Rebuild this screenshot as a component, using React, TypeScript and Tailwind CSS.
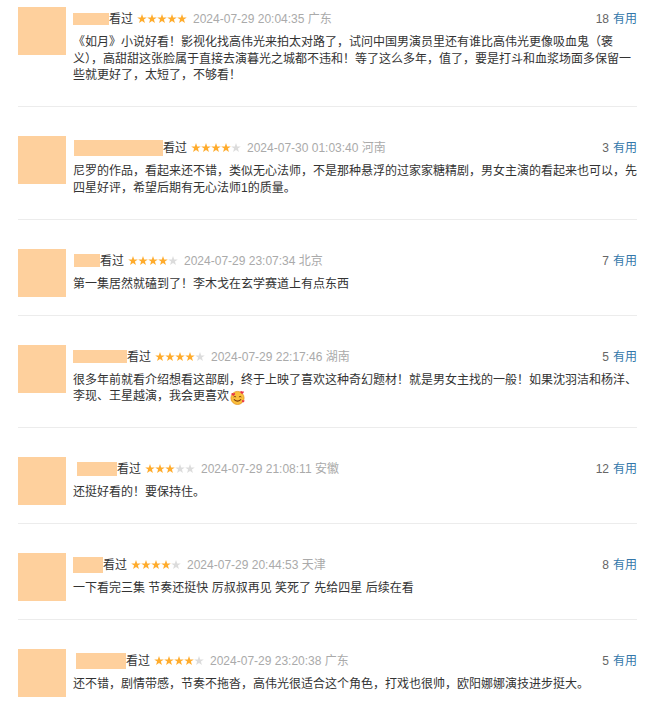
import React from "react"

type Review = {
    nameClass: string
    stars: number
    date: string
    place: string
    useful: number
    lines: React.ReactNode[]
}

function Stars({ count }: { count: number }) {
    const pts = "5,0 6.18,3.38 9.76,3.45 6.9,5.62 7.94,9.05 5,7 2.06,9.05 3.1,5.62 0.24,3.45 3.82,3.38"
    return (
        <svg width="50" height="10" viewBox="0 0 50 10" className="ml-[4px] mr-[6px] shrink-0">
            {[0, 1, 2, 3, 4].map((i) => (
                <polygon
                    key={i}
                    points={pts}
                    transform={`translate(${i * 10} 0)`}
                    fill={i < count ? "#ffac2d" : "#dcdcdc"}
                />
            ))}
        </svg>
    )
}

function HeartFace() {
    return (
        <svg width="15" height="15" viewBox="0 0 16 16" className="inline-block align-[-2px] ml-[1px] -mt-[3px] -mb-[3px]">
            <circle cx="8" cy="8.5" r="7" fill="#fbbf3c" stroke="#e2901a" strokeWidth="0.8" />
            <path d="M4.5 10.2 Q8 13.6 11.5 10.2" fill="none" stroke="#7a3b0c" strokeWidth="1.1" strokeLinecap="round" />
            <path d="M4.2 7.2 Q5.2 6.2 6.2 7.2" fill="none" stroke="#7a3b0c" strokeWidth="1" strokeLinecap="round" />
            <path d="M9.8 7.2 Q10.8 6.2 11.8 7.2" fill="none" stroke="#7a3b0c" strokeWidth="1" strokeLinecap="round" />
            <path d="M1.5 4.2 c0-1.3 1.8-1.5 2 -0.3 c0.3-1.2 2.1-0.9 1.9 0.4 c-0.2 1-1.9 2-1.9 2 s-2-1-2-2.1z" fill="#e8334a" />
            <path d="M11 2.2 c0-1.2 1.7-1.4 1.9 -0.3 c0.3-1.1 2-0.8 1.8 0.4 c-0.2 0.9-1.8 1.9-1.8 1.9 s-1.9-0.9-1.9-2z" fill="#e8334a" />
            <path d="M12.6 11.6 c0-1 1.4-1.1 1.5 -0.2 c0.3-0.9 1.6-0.6 1.4 0.3 c-0.2 0.8-1.4 1.5-1.4 1.5 s-1.5-0.7-1.5-1.6z" fill="#e8334a" />
        </svg>
    )
}

const reviews: Review[] = [
    {
        nameClass: "w-[36px] h-[12px]",
        stars: 5,
        date: "2024-07-29 20:04:35",
        place: "广东",
        useful: 18,
        lines: [
            "《如月》小说好看！影视化找高伟光来拍太对路了，试问中国男演员里还有谁比高伟光更像吸血鬼（褒",
            "义），高甜甜这张脸属于直接去演暮光之城都不违和！等了这么多年，值了，要是打斗和血浆场面多保留一",
            "些就更好了，太短了，不够看！",
        ],
    },
    {
        nameClass: "w-[89px] h-[16px] ml-[1px]",
        stars: 4,
        date: "2024-07-30 01:03:40",
        place: "河南",
        useful: 3,
        lines: [
            "尼罗的作品，看起来还不错，类似无心法师，不是那种悬浮的过家家糖精剧，男女主演的看起来也可以，先",
            "四星好评，希望后期有无心法师1的质量。",
        ],
    },
    {
        nameClass: "w-[26px] h-[13px] ml-[1px]",
        stars: 4,
        date: "2024-07-29 23:07:34",
        place: "北京",
        useful: 7,
        lines: ["第一集居然就磕到了！李木戈在玄学赛道上有点东西"],
    },
    {
        nameClass: "w-[54px] h-[13px]",
        stars: 4,
        date: "2024-07-29 22:17:46",
        place: "湖南",
        useful: 5,
        lines: [
            "很多年前就看介绍想看这部剧，终于上映了喜欢这种奇幻题材！就是男女主找的一般！如果沈羽洁和杨洋、",
            <>李现、王星越演，我会更喜欢<HeartFace /></>,
        ],
    },
    {
        nameClass: "w-[40px] h-[14px] ml-[4px]",
        stars: 3,
        date: "2024-07-29 21:08:11",
        place: "安徽",
        useful: 12,
        lines: ["还挺好看的！要保持住。"],
    },
    {
        nameClass: "w-[30px] h-[16px]",
        stars: 4,
        date: "2024-07-29 20:44:53",
        place: "天津",
        useful: 8,
        lines: ["一下看完三集 节奏还挺快 厉叔叔再见 笑死了 先给四星 后续在看"],
    },
    {
        nameClass: "w-[50px] h-[16px] ml-[3px]",
        stars: 4,
        date: "2024-07-29 23:20:38",
        place: "广东",
        useful: 5,
        lines: ["还不错，剧情带感，节奏不拖沓，高伟光很适合这个角色，打戏也很帅，欧阳娜娜演技进步挺大。"],
    },
]

export default function App() {
    return (
        <div
            className="w-[660px] h-[705px] overflow-hidden bg-white text-[12px]"
            style={{ fontFamily: '"Liberation Sans", "Noto Sans CJK SC", sans-serif' }}
        >
            <div className="ml-[18px] w-[619px]">
                {reviews.map((r, idx) => (
                    <div
                        key={idx}
                        className={
                            idx === 0
                                ? "flex items-start pt-[7px] border-b border-[#ececec]"
                                : "flex items-start pt-[29px] border-b border-[#ececec]"
                        }
                    >
                        <div className="w-12 h-12 shrink-0 bg-[#fed09d]"></div>

                        <div className="ml-[7px] flex-1 min-w-0 pb-[22.5px]">
                            <div className="mt-[3px] h-[18px] flex items-center justify-between">
                                <div className="flex items-center whitespace-nowrap">
                                    <span className={"inline-block bg-[#fed09d] " + r.nameClass}></span>
                                    <span className="text-[#333]">看过</span>
                                    <Stars count={r.stars} />
                                    <span className="text-[#aaa]">{r.date} {r.place}</span>
                                </div>
                                <div className="whitespace-nowrap">
                                    <span className="text-[#666]">{r.useful}</span>
                                    <span className="ml-[4px] text-[#3377aa]">有用</span>
                                </div>
                            </div>

                            <p className="mt-[6px] leading-[16.5px] text-[#333] whitespace-nowrap">
                                {r.lines.map((line, i) => (
                                    <React.Fragment key={i}>
                                        {i > 0 && <br />}
                                        {line}
                                    </React.Fragment>
                                ))}
                            </p>
                        </div>
                    </div>
                ))}
            </div>
        </div>
    )
}
